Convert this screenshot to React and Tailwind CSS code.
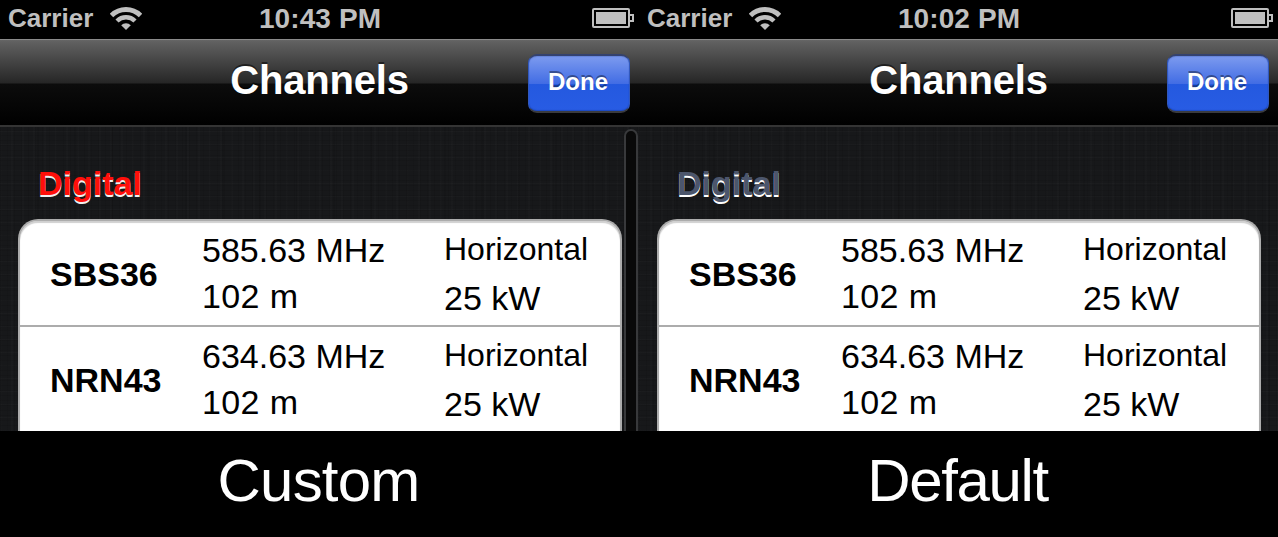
const LINEN =
  "bg-[#17181a] bg-[repeating-linear-gradient(90deg,rgba(0,0,0,0.07)_0px,rgba(0,0,0,0.07)_1px,transparent_1px,transparent_7px),repeating-linear-gradient(0deg,rgba(0,0,0,0.08)_0px,rgba(0,0,0,0.08)_1px,transparent_1px,transparent_5px),repeating-linear-gradient(90deg,rgba(255,255,255,0.012)_0px,rgba(255,255,255,0.012)_2px,transparent_2px,transparent_11px),repeating-linear-gradient(0deg,rgba(255,255,255,0.015)_0px,rgba(255,255,255,0.015)_1px,transparent_1px,transparent_13px),repeating-linear-gradient(90deg,rgba(0,0,0,0.08)_0px,rgba(0,0,0,0.08)_2px,transparent_2px,transparent_37px)]";

const CHANNELS = [
  { name: "SBS36", freq: "585.63 MHz", height: "102 m", polarity: "Horizontal", power: "25 kW" },
  { name: "NRN43", freq: "634.63 MHz", height: "102 m", polarity: "Horizontal", power: "25 kW" },
];

function WifiIcon() {
  return (
    <svg className="mt-[7px] ml-[17px] h-[23px] w-[32px] shrink-0" viewBox="0 0 32 23">
      <g fill="none" stroke="#bfbfbf">
        <path d="M1.5 8.5 A20.5 20.5 0 0 1 30.5 8.5" strokeWidth="4.8" />
        <path d="M7 14 A12.75 12.75 0 0 1 25 14" strokeWidth="4.4" />
      </g>
      <path d="M11.2 18.2 A6.8 6.8 0 0 1 20.8 18.2 L16 23 Z" fill="#bfbfbf" />
    </svg>
  );
}

function BatteryIcon() {
  return (
    <svg className="mt-[8px] h-[20px] w-[42px] shrink-0" viewBox="0 0 42 20">
      <rect x="1" y="1" width="36" height="18" rx="1" fill="none" stroke="#bfbfbf" strokeWidth="2" />
      <rect x="4" y="4" width="30" height="12" fill="#bfbfbf" />
      <path d="M38 7 H41 V13 H38" fill="none" stroke="#bfbfbf" strokeWidth="2" />
    </svg>
  );
}

function StatusBar({ time }) {
  return (
    <div className="grid h-[39px] grid-cols-[1fr_auto_1fr] items-start bg-black pr-[7px] pl-[8px] font-bold text-[#bfbfbf]">
      <div className="flex items-start">
        <span className="text-[26px] leading-[36px]">Carrier</span>
        <WifiIcon />
      </div>
      <span className="text-[28px] leading-[37px] tracking-[0.1px]">{time}</span>
      <div className="-mr-[2px] flex justify-end">
        <BatteryIcon />
      </div>
    </div>
  );
}

function NavBar() {
  return (
    <div className="grid h-[88px] grid-cols-[1fr_auto_1fr] items-start border-t border-b-2 border-t-[#8a8a8a] border-b-[#343434] bg-[linear-gradient(to_bottom,#666_0px,#606060_2px,#262626_43px,#0c0c0c_44px,#000_85px)] bg-origin-padding pr-[9px] pl-[9px]">
      <span />
      <h1 className="mt-[14px] text-[40px] leading-[52px] font-bold tracking-[-0.2px] text-white [text-shadow:0_-2px_0_rgba(0,0,0,0.5)]">Channels</h1>
      <div className="flex justify-end">
        <button className="mt-[14px] h-[59px] w-[102px] rounded-[9px] border border-t-2 border-b-2 border-t-[#34426f] border-r-[#3158bd] border-b-[#3a3b3e] border-l-[#3158bd] bg-[linear-gradient(to_bottom,#7d9bef_0px,#416ce4_28px,#2459df_28px,#285ce4_55px)] bg-origin-padding pr-[2px] pb-[4px] text-[24px] font-bold text-white shadow-[inset_0_-1px_1px_rgba(10,40,130,0.35),inset_0_1px_1px_rgba(50,80,170,0.3)] [text-shadow:0_-2px_0_rgba(0,0,0,0.4)]">
          Done
        </button>
      </div>
    </div>
  );
}

function ChannelRow({ channel }) {
  return (
    <div className="flex h-[106px] shrink-0 items-start border-b-2 border-[#acacac] pl-[30px] whitespace-nowrap text-black">
      <div className="w-[152px] pt-[36px] text-[34px] leading-[34px] font-bold">{channel.name}</div>
      <div className="w-[242px] pt-[6px] text-[34px] leading-[46px]">
        <div>{channel.freq}</div>
        <div className="tracking-[0.4px]">{channel.height}</div>
      </div>
      <div className="pt-[4px] leading-[49px]">
        <div className="text-[32px]">{channel.polarity}</div>
        <div className="text-[34px]">{channel.power}</div>
      </div>
    </div>
  );
}

function Screen({ time, headingClass, caption, captionClass, scroller }) {
  return (
    <section className="flex w-[639px] flex-col">
      <StatusBar time={time} />
      <NavBar />
      <div className={`relative flex h-[304px] flex-col overflow-hidden ${LINEN}`}>
        <h2 className={`pt-[35px] pl-[38px] text-[34px] leading-[42px] font-bold ${headingClass}`}>Digital</h2>
        <div className="mt-[15px] ml-[18px] flex h-[240px] w-[604px] shrink-0 flex-col rounded-t-[20px] border-2 border-b-0 border-[#acacac] bg-white shadow-[inset_0_2px_1px_#d0d0d0]">
          {CHANNELS.map((channel) => (
            <ChannelRow key={channel.name} channel={channel} />
          ))}
        </div>
        {scroller && (
          <div className="absolute top-[2px] left-[624px] h-[330px] w-[14px] rounded-full border-2 border-[#38393b] bg-[#090909]" />
        )}
      </div>
      <div className="flex h-[106px] justify-center bg-black pr-[2px] text-[60px] leading-[100px] text-white">
        <span className={captionClass}>{caption}</span>
      </div>
    </section>
  );
}

export default function App() {
  return (
    <main className="flex h-[537px] w-[1278px] overflow-hidden bg-black font-['Liberation_Sans',Arial,sans-serif]">
      <Screen
        time="10:43 PM"
        headingClass="text-[#ff0f0a] [text-shadow:0_2px_0_#f0f0f0]"
        caption="Custom"
        captionClass="tracking-[-0.8px]"
        scroller
      />
      <Screen
        time="10:02 PM"
        headingClass="text-[#4c566c] [text-shadow:0_2px_0_#fff]"
        caption="Default"
        captionClass="tracking-[-1.4px]"
      />
    </main>
  );
}
